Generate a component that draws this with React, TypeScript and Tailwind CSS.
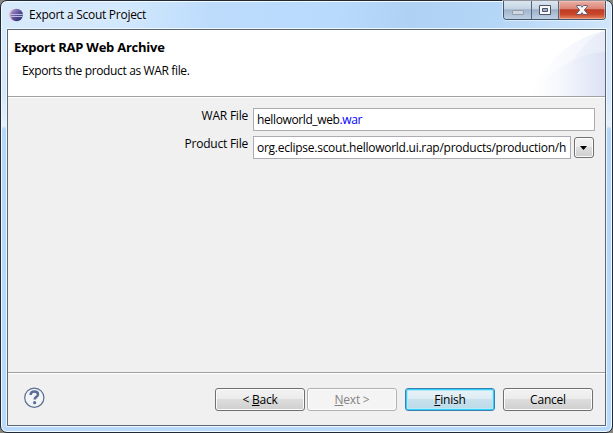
import type { ReactNode } from "react";

function EclipseIcon() {
  return (
    <svg className="h-[14px] w-[14px] shrink-0" viewBox="0 0 14 14">
      <defs>
        <linearGradient id="ball" x1="0" y1="0" x2="1" y2="1">
          <stop offset="0" stopColor="#b9a6d6" />
          <stop offset=".5" stopColor="#5b5198" />
          <stop offset="1" stopColor="#292561" />
        </linearGradient>
      </defs>
      <circle cx="6.3" cy="7" r="6.2" fill="#e9b6cc" />
      <circle cx="7.7" cy="7" r="6.2" fill="url(#ball)" />
      <path d="M1.5 6.5h12.3M1.8 8.5h11.8" stroke="#c3c5e5" strokeWidth=".9" />
    </svg>
  );
}

function WindowControls() {
  return (
    <div className="mr-[5px] flex h-[19px] w-[103px] overflow-hidden rounded-b-[4px] border border-t-0 border-[#42566d] shadow-[0_0_0_1px_rgba(255,255,255,.5)]">
      <div className="flex w-[28px] items-center justify-center border-r border-[#53667e] bg-[linear-gradient(#dbe6f1_0%,#c4d2e2_45%,#a1b4ca_48%,#bed0e4_100%)] pt-[5px]">
        <div className="h-[5px] w-[12px] rounded-[1px] border border-[#929fae] bg-[#d0d7df]" />
      </div>
      <div className="flex w-[27px] items-center justify-center border-r border-[#53667e] bg-[linear-gradient(#dbe6f1_0%,#c4d2e2_45%,#9bafc7_48%,#bed0e4_100%)]">
        <svg className="h-[10px] w-[12px]" viewBox="0 0 12 10">
          <path d="M.5.5h11v9H.5z" fill="#f8f8f8" stroke="#4f5369" />
          <path d="M3.5 3.5h5v3h-5z" fill="#9eb3cd" stroke="#4f5369" />
        </svg>
      </div>
      <div className="flex flex-1 items-center justify-center bg-[linear-gradient(#eab0a5_0%,#d98273_45%,#bd3a25_48%,#ca492b_75%,#e38766_100%)] shadow-[inset_0_0_0_1px_rgba(255,210,195,.45)]">
        <svg className="h-[10px] w-[12px]" viewBox="0 0 12 10">
          <path d="M.7.5h3.8L6 2.3 7.5.5h3.8v1L8.3 5l3 3.5v1H7.5L6 7.7 4.5 9.5H.7v-1l3-3.5-3-3.5z" fill="#f7f7f7" stroke="#575469" strokeWidth=".9" />
        </svg>
      </div>
    </div>
  );
}

function HeaderArt() {
  return (
    <svg className="h-[66px] w-[76px] shrink-0" viewBox="0 0 76 66">
      <defs>
        <linearGradient id="arcA" x1="0" x2="1">
          <stop offset="0" stopColor="#fff" />
          <stop offset=".3" stopColor="#fbfcfe" />
          <stop offset="1" stopColor="#eef2fb" />
        </linearGradient>
        <linearGradient id="arcB" x1="0" x2="1">
          <stop offset="0" stopColor="#f4f6fc" />
          <stop offset="1" stopColor="#e6ebf8" />
        </linearGradient>
        <linearGradient id="arcC" x1="0" x2="1">
          <stop offset="0" stopColor="#fff" />
          <stop offset=".35" stopColor="#f6f8fd" />
          <stop offset="1" stopColor="#dce2f5" />
        </linearGradient>
      </defs>
      <path d="M0 66C16 32 43 7 76 1v65z" fill="url(#arcA)" />
      <path d="M34 66C38 34 54 9 76 1v65z" fill="url(#arcB)" />
      <path d="M5 66C22 39 46 24 76 22v44z" fill="url(#arcC)" />
    </svg>
  );
}

const buttonStyles = {
  normal:
    "border-[#707070] bg-[linear-gradient(#f3f3f3_0%,#ebebeb_49%,#dddddd_50%,#cfcfcf_100%)] shadow-[inset_0_0_0_1px_#fbfbfb]",
  disabled: "border-[#adb2b5] bg-[#f4f4f4] text-[#838383] shadow-[inset_0_0_0_1px_#fcfcfc]",
  primary:
    "border-[#3c7fb1] bg-[linear-gradient(#eaf4f9_0%,#dcebf3_49%,#c8e1ec_50%,#b9d9e7_100%)] shadow-[inset_0_0_0_1px_#32cffb,inset_0_0_0_2px_#b4e9fa]",
};

function Button({ kind = "normal", children }: { kind?: keyof typeof buttonStyles; children: ReactNode }) {
  return (
    <button className={`h-[23px] w-[90px] rounded-[3px] border leading-[21px] ${buttonStyles[kind]}`}>
      {children}
    </button>
  );
}

export default function App() {
  return (
    <div className="h-[433px] w-[613px] bg-[#85867f] font-['Open_Sans','Noto_Sans',sans-serif] text-[12px] tracking-[-0.22px] text-black">
      <div className="flex h-full flex-col rounded-[7px] border border-[#222936] bg-[linear-gradient(#d8eafc_0px,#d4e8fc_95px,#e5f0fb_125px,#b5d6f8_128px,#badafc_433px)] px-[5px] pb-[5px] shadow-[inset_0_0_0_1px_#f3faff]">
        <header className="-mx-[4px] mt-px flex h-[26px] shrink-0 items-start justify-between rounded-t-[6px] bg-[linear-gradient(100deg,#d7eafc_0%,#d2e8fd_20%,#bddcfc_34%,#b8dafd_55%,#afd2f4_67%,#b3d5f6_80%,#d0e6fb_100%)]">
          <div className="flex items-center gap-[6px] pl-[7px] pt-[5px]">
            <EclipseIcon />
            <h1 className="leading-[16px] tracking-[-0.27px] [text-shadow:0_0_6px_white]">Export a Scout Project</h1>
          </div>
          <div className="-mt-px">
            <WindowControls />
          </div>
        </header>
        <div className="flex min-h-0 flex-1 flex-col rounded-[1px] border border-[#eef7ff]">
          <main className="flex min-h-0 flex-1 flex-col border border-[#5b6672] bg-[#f0f0f0]">
            <section className="flex h-[66px] shrink-0 justify-between bg-white">
              <div className="pl-[6px] pt-[9px]">
                <h2 className="text-[13px] font-bold leading-[16px] tracking-[-0.25px]">Export RAP Web Archive</h2>
                <p className="pl-[8px] pt-[8px] leading-[16px] tracking-[-0.36px]">Exports the product as WAR file.</p>
              </div>
              <HeaderArt />
            </section>
            <div className="h-[2px] shrink-0 border-t border-[#a0a0a0] bg-white" />
            <form className="flex flex-1 flex-col gap-[5px] pt-[10px]">
              <div className="flex h-[23px]">
                <label className="w-[240px] text-right leading-[16px]">WAR File</label>
                <div className="ml-[5px] w-[342px] border border-[#abadb3] bg-white pl-[3px] leading-[22px] tracking-[-0.38px]">
                  helloworld_web<span className="text-[#0000ff]">.war</span>
                </div>
              </div>
              <div className="flex h-[23px]">
                <label className="w-[240px] text-right leading-[16px]">Product File</label>
                <div className="ml-[5px] w-[318px] border border-[#abadb3] bg-white px-[3px] leading-[22px]">
                  <div className="h-[21px] overflow-hidden whitespace-nowrap tracking-[-0.26px]">
                    org.eclipse.scout.helloworld.ui.rap/products/production/h
                  </div>
                </div>
                <button
                  type="button"
                  className="ml-[3px] mt-px flex h-[21px] w-[20px] items-center justify-center rounded-[3px] border border-[#707070] bg-[linear-gradient(#f3f3f3_0%,#ebebeb_49%,#dddddd_50%,#cfcfcf_100%)] pr-px shadow-[inset_0_0_0_1px_#fbfbfb]"
                >
                  <svg className="h-[4px] w-[7px]" viewBox="0 0 7 4">
                    <path d="M0 0h7L3.5 4z" />
                  </svg>
                </button>
              </div>
            </form>
            <footer className="flex h-[53px] shrink-0 items-start border-t border-[#a0a0a0] pr-[12px] pt-[15px] shadow-[inset_0_1px_0_white]">
              <svg className="ml-[16px] mt-[-1px] h-[21px] w-[21px]" viewBox="0 0 21 21">
                <circle cx="10.3" cy="10.7" r="9.6" fill="#f3f4f5" stroke="#596e93" strokeWidth="1.2" />
                <path d="M6.6 8c0-2.4 1.6-3.5 3.8-3.5s3.6 1.1 3.6 2.9c0 2.4-3.3 2.5-3.3 5.1" fill="none" stroke="#596e98" strokeWidth="2.5" />
                <circle cx="10.6" cy="15.7" r="1.6" fill="#596e98" />
              </svg>
              <div className="ml-auto flex">
                <Button>&lt; <u>B</u>ack</Button>
                <div className="ml-[2px]">
                  <Button kind="disabled"><u>N</u>ext &gt;</Button>
                </div>
                <div className="ml-[8px] flex gap-[8px]">
                  <Button kind="primary"><u>F</u>inish</Button>
                  <Button>Cancel</Button>
                </div>
              </div>
            </footer>
          </main>
        </div>
      </div>
    </div>
  );
}
